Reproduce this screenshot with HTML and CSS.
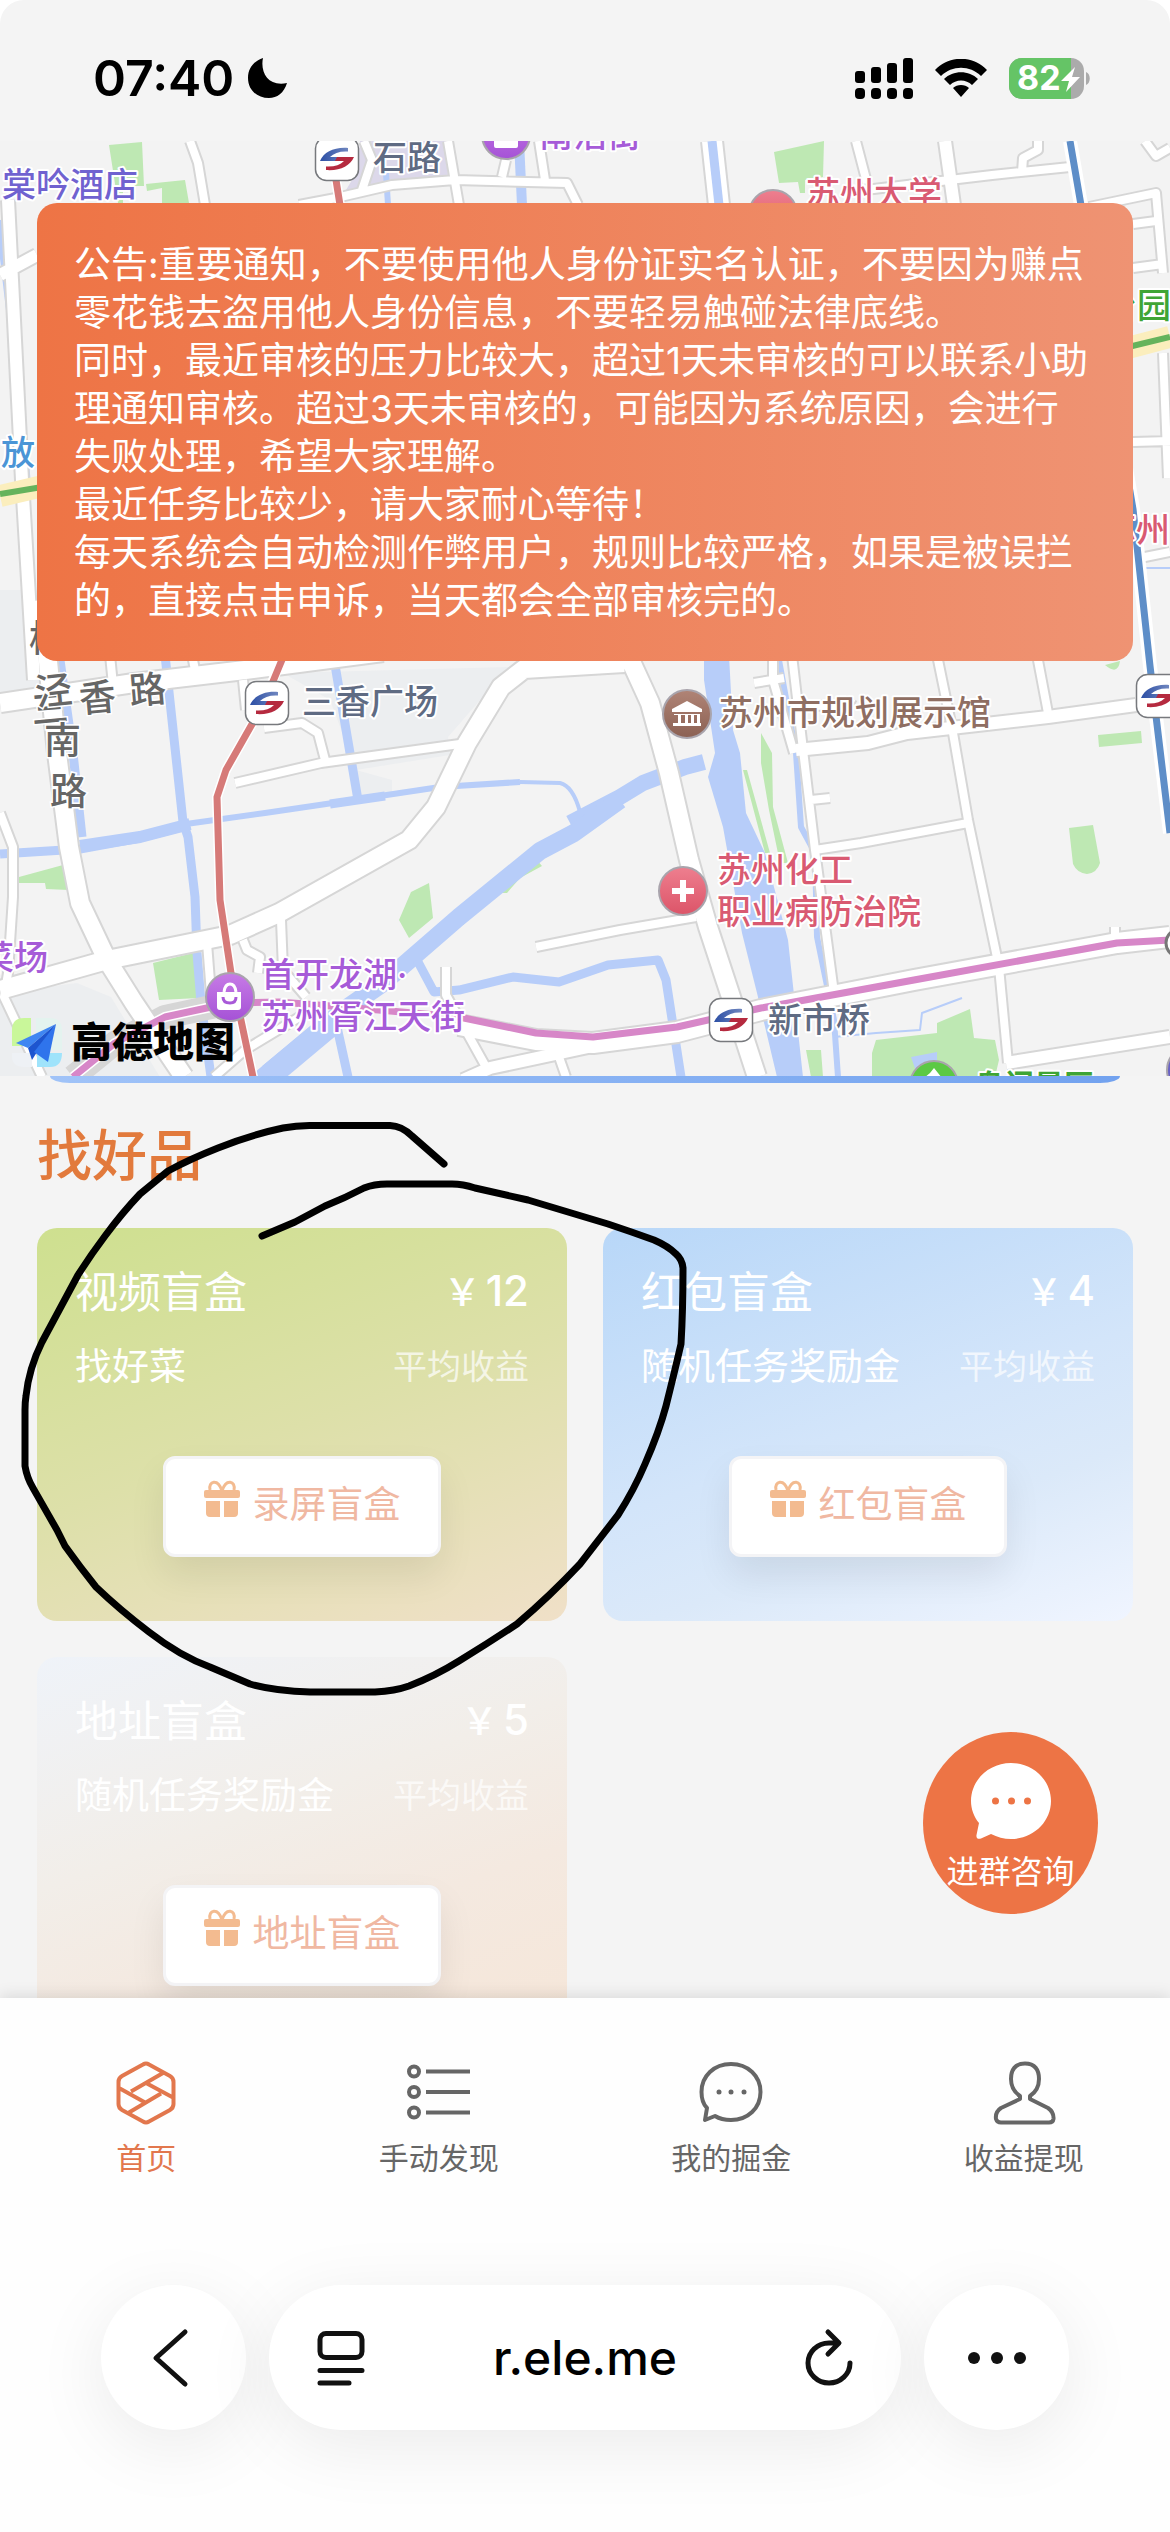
FILE: index.html
```html
<!DOCTYPE html>
<html lang="zh-CN">
<head>
<meta charset="utf-8">
<meta name="viewport" content="width=device-width, initial-scale=1">
<title>首页</title>
<link rel="stylesheet" href="styles.css">
</head>
<body>
<svg class="defs" aria-hidden="true">
  <defs>
    <linearGradient id="metro-blue" x1="0" y1="0" x2="1" y2="0"><stop offset="0" stop-color="#2c4fa5"/><stop offset="1" stop-color="#6f86bf"/></linearGradient>
    <linearGradient id="poi-purple" x1="0" y1="0" x2="0" y2="1"><stop offset="0" stop-color="#c77be6"/><stop offset="1" stop-color="#a552d6"/></linearGradient>
    <linearGradient id="poi-red" x1="0" y1="0" x2="0" y2="1"><stop offset="0" stop-color="#ee7f8f"/><stop offset="1" stop-color="#dc5468"/></linearGradient>
    <linearGradient id="poi-brown" x1="0" y1="0" x2="0" y2="1"><stop offset="0" stop-color="#b08476"/><stop offset="1" stop-color="#8b6153"/></linearGradient>
    <symbol id="metro" viewBox="-23 -23 46 46">
      <rect x="-21.500" y="-21.500" width="43" height="43" rx="11" fill="#fff" stroke="#77797d" stroke-width="1.500"/>
      <path d="M11-11C-3-12-13-7-17 2H0L2-2H-7C-3-6 3-8 11-7.500z" fill="url(#metro-blue)"/>
      <path d="M-11 11C3 12 13 7 17-2H0L-2 2H7C3 6-3 8-11 7.500z" fill="#b52a3f"/>
    </symbol>
    <symbol id="gift" viewBox="0 0 36 38">
      <path d="M18 11C14-2 4 1 6 10M18 11C22-2 32 1 30 10" fill="none" stroke="currentColor" stroke-width="3"/>
      <rect x="0" y="10" width="36" height="8" rx="2" fill="currentColor"/>
      <path d="M2 21h14v16H6a4 4 0 0 1-4-4zM20 21h14v12a4 4 0 0 1-4 4H20z" fill="currentColor"/>
    </symbol>
  </defs>
</svg>

<header class="status">
  <div class="status-side">
    <time class="clock">07:40</time>
    <svg class="moon" viewBox="0 0 40 40" role="img" aria-label="勿扰模式"><path d="M15 0C12 14 20 29 39 25C36 35 29 40 21 40C9 40 0 32 0 20C0 10 6 3 15 0z"/></svg>
  </div>
  <div class="status-side status-right">
    <svg class="signal" viewBox="0 0 58 41" role="img" aria-label="信号"><rect y="13" width="10" height="12" rx="3"/><rect x="16" y="9" width="10" height="16" rx="3"/><rect x="32" y="5" width="10" height="20" rx="3"/><rect x="48" width="10" height="25" rx="3"/><rect y="30" width="10" height="11" rx="4"/><rect x="16" y="30" width="10" height="11" rx="4"/><rect x="32" y="30" width="10" height="11" rx="4"/><rect x="48" y="30" width="10" height="11" rx="4"/></svg>
    <svg class="wifi" viewBox="0 0 52 38" role="img" aria-label="无线网络"><path d="M0 11C14-4 38-4 52 11l-6 6C35 6 17 6 6 17zM9 20c9-9 25-9 34 0l-6 6c-6-6-16-6-22 0zM18 29c4-4 12-4 16 0l-8 9z"/></svg>
    <svg class="battery" viewBox="0 0 82 41" role="img" aria-label="电量 82%">
      <rect width="75" height="41" rx="13" fill="#ababab"/><path d="M13 0h49v41H13A13 13 0 0 1 0 28V13A13 13 0 0 1 13 0z" fill="#65c466"/>
      <path d="M77 14c5 2 5 11 0 13z" fill="#ababab"/>
      <text x="8" y="32" class="battery-text">82</text>
      <path d="M66 9L52 23h8l-3 11 14-15h-8z" fill="#fff"/>
    </svg>
  </div>
</header>

<main class="content">
  <section class="map">
    <svg class="map-art" viewBox="0 141 1170 935" preserveAspectRatio="xMidYMid slice" role="img" aria-label="地图">
      <rect y="141" width="1170" height="935" fill="#f3f3f3"/>
      <path fill="#eceef0" d="M0 590H42L50 690L0 700zM283 673L509 667L448 737L450 755L356 770L392 780V793L360 800L345 740L330 700zM0 993L77 983L111 997L160 1077H0z"/>
      <path fill="#dcd8ea" d="M360 141H446L448 175L396 184L343 195L358 170z"/>
      <g fill="#bee8b3">
        <path d="M109 145L142 142L144 186H123V203H118zM146 184L185 180L189 203H162V188L147 191z"/>
        <path d="M774 152L824 141L823 177L805 180V193H800L798 182L779 183z"/>
        <path d="M19 877L63 865L69 890L46 889L45 883H19zM153 963L193 953L199 998L159 1000zM411 892L429 883L433 918L409 938L399 920z"/>
        <path d="M536 859L542 866L520 878L507 893H498L478 910L463 925L459 922L494 888z"/>
        <path d="M761 733L772 753L773 807L788 863H780L769 810L761 763zM743 770H747L770 853H765zM1098 735L1141 731L1142 743L1099 747zM1069 828L1093 825L1100 863Q1097 873 1087 874Q1077 873 1073 864z"/>
        <path d="M876 1040L937 1033V1023L970 1009L974 1038L995 1040L999 1060L995 1077H872V1053zM806 1050H821L823 1077H811zM1105 665Q1118 676 1120 661z"/>
      </g>
      <g fill="none" stroke="#b7cdf9" stroke-linejoin="round">
        <path stroke-width="9" d="M0 854L80 849L140 838L186 826"/>
        <path stroke-width="12" d="M80 846L140 837L190 824"/>
        <path stroke-width="6" d="M186 824L265 813L360 799L440 787L520 782"/>
        <path stroke-width="9" d="M330 804L385 796"/>
        <path stroke-width="4" d="M520 782L560 783Q573 786 580 812"/>
        <path stroke-width="9" d="M165 655L183 822L188 837L195 897L197 953L201 1003L211 1077M335 665L358 800M60 660L73 753L82 837M0 220L14 340L26 480"/>
        <path stroke-width="16" d="M704 762L685 767L643 783L620 797L570 823"/>
        <path stroke-width="18" d="M620 800L574 833L540 851L497 886L459 917L406 963L383 983L344 1010L268 1073"/>
        <path stroke-width="24" d="M330 1025L262 1082"/>
        <path stroke-width="9" d="M417 960L434 992L459 990L513 977L559 982L608 965L658 960L666 980L681 1077M337 1027L348 1077"/>
        <path stroke-width="6" d="M779 660L796 753L801 827L815 853L817 937L834 1020L838 1077"/>
        <path stroke-width="10" d="M519 141L522 205"/><path stroke-width="6" d="M386 173L388 205"/>
        <path stroke-width="2" d="M834 1037L876 1033L920 1030L922 1013L962 998M1140 568H1170"/>
      </g>
      <path fill="#b7cdf9" d="M704 655H729L733 730L740 753L746 813L765 853L788 940L803 1077H777L757 993L742 933L723 827L708 777L715 753L704 680zM911 1057L937 1052V1077H918z"/>
      <defs>
        <g id="small-roads">
          <path d="M190 141L198 163L205 205M299 205L336 198L392 185L455 180L567 183L578 205M448 141L459 205M506 160L502 177M539 141L545 180M364 141L372 160L362 190M856 141L867 183M865 190L992 175L1070 167M1038 141V150L1023 158L1022 172M1089 207L1156 193L1163 273M1133 224L1156 221M1133 268L1163 264M1163 353L1168 478M1133 442L1170 441M1140 558L1170 552M1145 141L1156 156L1170 148"/>
          <path d="M235 783L321 763L467 743M264 728L302 723L318 733L325 760M110 655L113 685M192 655L196 675M243 680L246 710M0 813L13 847V897L8 973L4 997L42 1077M207 943L212 1007M281 920L283 970L306 997M243 940L247 950L260 957L258 973M214 1077L245 1050L306 1013M446 967V995L486 1067M559 1057L566 1077M536 947L620 930L696 917"/>
          <path d="M792 655L803 750L815 850L834 993M773 655V680L794 753M937 655L953 733L968 820L999 967L1008 1063M1037 655L1048 713M815 850L861 843L968 823M811 800L830 798M754 683L784 678M1115 927V943M811 706L848 705L852 698"/>
        </g>
        <g id="big-roads">
          <path d="M42 600L57 753L69 847L80 903L107 960L134 1003L184 1077M0 990L107 960L230 935L279 913L409 840L436 807L467 743L501 687L524 669L624 663M0 703L134 683L245 670L383 652M628 655L650 703L669 773L689 860L708 927L731 997L757 1077"/>
        </g>
        <g id="mid-roads">
          <path d="M796 750L868 743L907 733L1048 717L1136 705M1006 1063L1170 1037M945 141L954 205M463 1080L490 1068L593 1046M0 275L37 255M8 200L22 480L34 680"/>
        </g>
      </defs>
      <g fill="none" stroke="#d6d6d6" stroke-linejoin="round">
        <use href="#small-roads" stroke-width="12"/><use href="#mid-roads" stroke-width="16"/><use href="#big-roads" stroke-width="22"/>
        <path stroke-width="24" d="M712 141L719 205M73 1077L115 1043L165 1017L230 1003M459 1025L536 1040L593 1043L677 1032L761 1010L914 980L1117 943L1170 937"/>
      </g>
      <g fill="none" stroke="#fff" stroke-linejoin="round">
        <use href="#small-roads" stroke-width="8"/><use href="#mid-roads" stroke-width="12"/><use href="#big-roads" stroke-width="18"/>
        <path stroke-width="20" d="M712 141L719 205M459 1025L536 1040L593 1043L677 1032L761 1010L914 980L1117 943L1170 937"/>
        <path stroke-width="14" d="M1070 141L1081 205L1133 509L1150 666L1170 833"/>
        <path stroke-width="10" d="M73 1077L115 1043L165 1017L230 1003M336 180L340 205M283 655L264 703L226 770L217 797L220 900L231 973L253 1077"/>
      </g>
      <g fill="none" stroke-linejoin="round">
        <path stroke="#b7cdf9" stroke-width="9" d="M712 141L719 205"/>
        <path stroke="#fbeebd" stroke-width="22" d="M0 496L60 482M1120 350L1170 337"/>
        <path stroke="#65b35c" stroke-width="6" d="M0 494L60 484M1120 349L1170 337"/>
        <path stroke="#d787c8" stroke-width="7" d="M73 1077L115 1043L165 1017L230 1003L279 1002L344 1007L459 1017L536 1033L593 1037L677 1027L761 1008L914 980L1117 943L1170 940"/>
        <path stroke="#d67a78" stroke-width="7" d="M336 180L340 205M284 655L264 703L226 770L217 797L220 900L231 973L253 1077"/>
        <path stroke="#5e8ec8" stroke-width="7" d="M1070 141L1081 205L1133 509L1150 666L1170 833"/>
      </g>
      <g stroke="#a9a4ac" stroke-width="2">
        <circle cx="230" cy="997" r="24" fill="url(#poi-purple)"/><circle cx="506" cy="135" r="24" fill="url(#poi-purple)"/>
        <circle cx="687" cy="714" r="24" fill="url(#poi-brown)"/><circle cx="683" cy="891" r="24" fill="url(#poi-red)"/>
        <circle cx="773" cy="214" r="24" fill="url(#poi-red)"/><circle cx="934" cy="1085" r="24" fill="#5cc945"/>
        <circle cx="1191" cy="1070" r="24" fill="#6861c6"/><circle cx="1180" cy="943" r="14" fill="#fff" stroke="#777" stroke-width="3"/>
      </g>
      <g fill="#fff">
        <path d="M217 992H241V1007Q241 1010 238 1010H220Q217 1010 217 1007zM494 135H518V146Q518 148 516 148H496Q494 148 494 146z"/>
        <path d="M687 701L702 709V712H672V709zM674 714H700V723H697V715H694V723H691V715H688V723H685V715H681V723H678V715H674zM673 723H701V726H673z"/>
        <path d="M680 880H686V888H694V894H686V902H680V894H672V888H680zM930 1073L934 1068L942 1078H924z"/>
      </g>
      <path fill="none" stroke="#fff" stroke-width="3" d="M224 992Q225 984 230 984Q235 984 236 992"/>
      <path fill="none" stroke="#a859d8" stroke-width="3" d="M223 997Q223 1003 230 1003Q236 1003 236 997"/>
      <use href="#metro" x="244" y="680" width="46" height="46"/><use href="#metro" x="708" y="997" width="46" height="46"/>
      <use href="#metro" x="314" y="136" width="46" height="46"/><use href="#metro" x="1135" y="673" width="46" height="46"/>
      <g class="map-label">
        <text x="373" y="170" fill="#5f6b83">石路</text>
        <text x="302" y="714" fill="#5f6b83">三香广场</text>
        <text x="768" y="1032" fill="#5f6b83">新市桥</text>
        <text x="2" y="197" fill="#7062d0">棠吟酒店</text>
        <text x="539" y="147" fill="#a65bd8">南浩街</text>
        <text x="806" y="206" fill="#d95a72">苏州大学</text>
        <text x="717" y="882" fill="#d95a72">苏州化工</text>
        <text x="717" y="924" fill="#d95a72">职业病防治院</text>
        <text x="1102" y="542" fill="#d95a72">苏州</text>
        <text x="719" y="725" fill="#8f6e62">苏州市规划展示馆</text>
        <text x="261" y="987" fill="#a65bd8">首开龙湖·</text>
        <text x="261" y="1029" fill="#a65bd8">苏州胥江天街</text>
        <text x="-20" y="970" fill="#a65bd8">菜场</text>
        <text x="1" y="465" fill="#4b95d6">放</text>
        <text x="1103" y="318" fill="#3fa535">台园</text>
        <text class="label-small" x="974" y="1096" fill="#3fa535">盘门景区</text>
      </g>
      <g class="road-label">
        <text x="29" y="652">横</text>
        <text x="31" y="722" transform="rotate(-5 49 709)">三</text><text x="35" y="704" transform="rotate(-6 53 690)">泾</text><text x="44" y="754">南</text><text x="50" y="805">路</text>
        <text x="79" y="711" transform="rotate(-5 97 698)">香</text><text x="129" y="703" transform="rotate(-5 147 690)">路</text>
      </g>
      <path fill="#c9f79a" d="M24 1018H31V1046H12V1030Q12 1018 24 1018z"/><path fill="#e4f3ef" d="M36 1018H50Q62 1018 62 1030V1050H36z"/><path fill="#9fe3fb" d="M37 1053H62Q62 1067 50 1067H37z"/><path fill="#eef1f5" d="M12 1053H32V1067H24Q12 1067 12 1056z"/>
      <path fill="#3f86f2" d="M56 1024L16 1043L28 1048z"/><path fill="#1d55cf" d="M56 1024L28 1048L32 1060L37 1052z"/><path fill="#2f74ec" d="M56 1024L34 1052L48 1062z"/>
      <text class="map-brand" x="71" y="1057">高德地图</text>
    </svg>
    <div class="notice">
      <p>公告:重要通知，不要使用他人身份证实名认证，不要因为赚点<br>零花钱去盗用他人身份信息，不要轻易触碰法律底线。</p>
      <p>同时，最近审核的压力比较大，超过1天未审核的可以联系小助<br>理通知审核。超过3天未审核的，可能因为系统原因，会进行<br>失败处理，希望大家理解。</p>
      <p>最近任务比较少，请大家耐心等待！</p>
      <p>每天系统会自动检测作弊用户，规则比较严格，如果是被误拦<br>的，直接点击申诉，当天都会全部审核完的。</p>
    </div>
  </section>
  <div class="banner-edge"></div>

  <section class="goods">
    <h1 class="goods-title">找好品</h1>
    <div class="cards">
      <article class="card card-green">
        <div class="row row-main"><h2>视频盲盒</h2><span class="price"><span class="yen">￥</span>12</span></div>
        <div class="row row-sub"><span>找好菜</span><span class="hint">平均收益</span></div>
        <button class="open" type="button"><svg class="gift"><use href="#gift"/></svg>录屏盲盒</button>
      </article>
      <article class="card card-blue">
        <div class="row row-main"><h2>红包盲盒</h2><span class="price"><span class="yen">￥</span>4</span></div>
        <div class="row row-sub"><span>随机任务奖励金</span><span class="hint">平均收益</span></div>
        <button class="open" type="button"><svg class="gift"><use href="#gift"/></svg>红包盲盒</button>
      </article>
      <article class="card card-sand">
        <div class="row row-main"><h2>地址盲盒</h2><span class="price"><span class="yen">￥</span>5</span></div>
        <div class="row row-sub"><span>随机任务奖励金</span><span class="hint">平均收益</span></div>
        <button class="open" type="button"><svg class="gift"><use href="#gift"/></svg>地址盲盒</button>
      </article>
    </div>
  </section>
</main>

<footer class="dock">
  <button class="chat" type="button">
    <svg class="chat-icon" viewBox="0 0 80 76"><path d="M40 0C62 0 80 17 80 38S62 76 40 76C33 76 26 74 20 71L10 75.500C7 76.500 5 75 5.500 72L8 60C3 54 0 46 0 38C0 17 18 0 40 0z" fill="#fff"/><g fill="#ed7445"><circle cx="24.500" cy="38" r="3.500"/><circle cx="40.500" cy="38" r="3.500"/><circle cx="56.500" cy="38" r="3.500"/></g></svg>
    进群咨询
  </button>
  <nav class="tabs">
    <a class="tab active" href="#home"><svg viewBox="0 0 64 64"><path d="M29 3.500Q32 1.500 35 3.500L56 15Q59.500 17 59.500 21V43Q59.500 47 56 49L35 60.500Q32 62.500 29 60.500L8 49Q4.500 47 4.500 43V21Q4.500 17 8 15zM49 12L17 30.500M32 22L59 36.500M5 27L32 42M47 32.500L15 51.500"/></svg>首页</a>
    <a class="tab" href="#discover"><svg viewBox="0 0 64 64"><g><circle cx="7" cy="10.500" r="5"/><circle cx="7" cy="31" r="5"/><circle cx="7" cy="51.500" r="5"/><path d="M19 10.500H63M19 31H63M19 51.500H63"/></g></svg>手动发现</a>
    <a class="tab" href="#chat"><svg viewBox="0 0 64 64"><path d="M32 3C49 3 61.500 15 61.500 31S49 59 32 59C26 59 20 57.500 16 55L6 59L8 47C4 43 2.500 37 2.500 31C2.500 15 15 3 32 3z"/><g fill="currentColor" stroke="none"><circle cx="20" cy="31" r="2.500"/><circle cx="32" cy="31" r="2.500"/><circle cx="45" cy="31" r="2.500"/></g></svg>我的掘金</a>
    <a class="tab" href="#income"><svg viewBox="0 0 64 64"><path d="M33 2.500C43 2.500 47 9 47 18C47 26 44 31 38 35V38L56 47Q62 51 61.500 58Q61 61.500 57 61.500H9Q5 61.500 4 58Q3 51 9 47L28 38V35C22 31 19 26 19 18C19 9 23 2.500 33 2.500z"/></svg>收益提现</a>
  </nav>
  <div class="browser">
    <button class="round" type="button" aria-label="后退"><svg viewBox="0 0 54 54"><path d="M38 1L9 27L38 53"/></svg></button>
    <div class="address">
      <button class="bare" type="button" aria-label="页面菜单"><svg viewBox="0 0 54 54"><rect x="6" y="2.500" width="42" height="24" rx="6" stroke-width="5"/><path stroke-width="5" d="M6 39.500H48M6 52H35"/></svg></button>
      <input class="url" type="text" value="r.ele.me" aria-label="网址">
      <button class="bare" type="button" aria-label="重新载入"><svg viewBox="0 0 54 54"><path d="M26 1L37 12L26 23M36 12H27A21 20 0 1 0 48 32"/></svg></button>
    </div>
    <button class="round" type="button" aria-label="更多"><svg viewBox="0 0 60 54"><g fill="currentColor" stroke="none"><circle cx="7" cy="27" r="6"/><circle cx="30" cy="27" r="6"/><circle cx="53" cy="27" r="6"/></g></svg></button>
  </div>
</footer>

<svg class="doodle" viewBox="0 0 700 600" aria-hidden="true"><path transform="translate(0 -1110)" d="M444 1164L412 1136Q402 1126 390 1125.500H314Q298 1125 283 1128Q250 1135 218 1148Q190 1159 168 1171L140 1194Q122 1213 105 1236Q90 1256 78 1275L42 1342Q29 1368 26 1396Q25 1402 25 1410V1466Q27 1478 33 1488L57 1530L65 1546Q80 1567 96 1587Q120 1610 149 1632Q180 1656 210 1667L250 1684Q275 1691 310 1692H375Q395 1691 409 1686Q435 1676 459 1661Q490 1642 517 1624Q550 1596 580 1564L618 1515Q634 1490 645 1464Q659 1432 666 1406Q675 1370 681 1344Q683 1310 683 1268Q682 1259 676 1254Q668 1246 654 1240Q632 1232 608 1224L528 1200L475 1188Q463 1184 452 1184H387Q374 1184 364 1188Q345 1198 325 1206L295 1222L262 1236"/></svg>
</body>
</html>
```

FILE: styles.css
```css
* { box-sizing: border-box; }

body {
  margin: 0;
  height: 100vh;
  display: flex;
  flex-direction: column;
  position: relative;
  overflow: hidden;
  background: #fff;
  color: #000;
  font-family: Inter, "Noto Sans CJK SC", sans-serif;
}

h1, h2, p { margin: 0; font-weight: 400; }
button, input { font: inherit; color: inherit; border: 0; background: none; padding: 0; }
.defs { position: absolute; width: 0; height: 0; }

/* status bar */
.status {
  flex: none;
  display: flex;
  justify-content: space-between;
  padding: 48px 79px 33px 93px;
  border-radius: 24px 24px 0 0;
  background: #f4f4f4;
}
.status-side { display: flex; align-items: center; gap: 14px; height: 60px; }
.status-right { gap: 22px; }
.clock { font-size: 50px; line-height: 60px; font-weight: 600; }
.moon { width: 40px; height: 40px; }
.signal { width: 58px; height: 41px; }
.wifi { width: 52px; height: 38px; }
.battery { width: 82px; height: 41px; }
.battery-text { font-size: 34px; font-weight: 700; fill: #fff; }

/* scrolling page */
.content {
  flex: 1;
  min-height: 0;
  overflow: hidden;
  background: #f4f4f4;
}
.map {
  position: relative;
  height: 935px;
  padding: 62px 37px 0;
}
.map-art { position: absolute; inset: 0; width: 100%; height: 100%; }
.map-label { font-size: 34px; font-weight: 500; stroke: #fff; stroke-width: 4px; paint-order: stroke; stroke-linejoin: round; }
.label-small { font-size: 30px; font-weight: 700; }
.road-label { font-size: 37px; font-weight: 500; fill: #666; stroke: #fff; stroke-width: 3px; paint-order: stroke; }
.map-brand { font-size: 41px; font-weight: 900; }

.notice {
  position: relative;
  padding: 38px 37px 36px;
  border-radius: 20px;
  background: linear-gradient(90deg, #ee7445, #ef9373);
  color: #fff;
  font-size: 37px;
  line-height: 48px;
  font-weight: 300;
  white-space: nowrap;
}
.banner-edge {
  height: 7px;
  margin: 0 50px;
  border-radius: 0 0 20px 20px / 0 0 7px 7px;
  background: linear-gradient(90deg, #a0c3f8, #72a2ef);
}

.goods { padding: 36px 37px; }
.goods-title {
  margin-bottom: 37px;
  color: #e27a3c;
  font-size: 55px;
  line-height: 72px;
  font-weight: 500;
}
.cards { display: grid; grid-template-columns: 1fr 1fr; gap: 36px; }
.card {
  display: flex;
  flex-direction: column;
  padding: 37px 38px 64px;
  border-radius: 20px;
  color: #fff;
}
.card-green { background: linear-gradient(160deg, #cee08f, #dde0a9 50%, #f0e0c8); }
.card-blue { background: linear-gradient(160deg, #b8d7f8, #d3e5fa 50%, #dbe9f9 70%, #f0f5ff); }
.card-sand { background: linear-gradient(160deg, #eff3f9, #f2eee9 40%, #f4e9e0 65%, #f6e6d8); }
.row { display: flex; justify-content: space-between; align-items: center; }
.row-main { height: 54px; margin-bottom: 22px; }
.row-main h2 { font-size: 43px; line-height: 54px; }
.price { font-size: 42px; line-height: 54px; font-weight: 500; }
.yen { margin-right: 5px; font-size: 37px; }
.row-sub { height: 52px; margin-bottom: 63px; font-size: 37px; line-height: 52px; }
.hint { font-size: 34px; opacity: .7; }
.open {
  align-self: center;
  display: flex;
  justify-content: center;
  gap: 13px;
  width: 278px;
  height: 101px;
  padding-top: 21px;
  border: 3px solid #f4f4f6;
  border-radius: 12px;
  background: #fff;
  box-shadow: 0 18px 36px rgba(0, 0, 0, .08);
  color: #f0b8a2;
  font-size: 37px;
  line-height: 50px;
}
.gift { width: 36px; height: 38px; color: #f3bb90; }

/* bottom dock */
.dock {
  flex: none;
  position: relative;
  background: #fefefe;
  box-shadow: 0 -3px 14px rgba(0, 0, 0, .1);
}
.chat {
  position: absolute;
  right: 72px;
  bottom: calc(100% + 84px);
  display: flex;
  flex-direction: column;
  align-items: center;
  gap: 13px;
  width: 175px;
  height: 182px;
  padding-top: 31px;
  border-radius: 50%;
  background: #ed7445;
  color: #fff;
  font-size: 32px;
  line-height: 40px;
  white-space: nowrap;
}
.chat-icon { width: 80px; height: 76px; }

.tabs { display: grid; grid-template-columns: repeat(4, 1fr); padding: 63px 0 107px; }
.tab {
  display: flex;
  flex-direction: column;
  align-items: center;
  gap: 13px;
  color: #666;
  font-size: 30px;
  line-height: 40px;
  text-decoration: none;
}
.tab svg { width: 64px; height: 64px; fill: none; stroke: currentColor; stroke-width: 4px; stroke-linejoin: round; }
.active { color: #e2774d; }

.browser { display: flex; gap: 23px; padding: 0 101px 102px; }
.round, .address {
  height: 145px;
  border-radius: 73px;
  background: #fff;
  box-shadow: 0 16px 72px rgba(0, 0, 0, .08);
}
.round { flex: none; width: 145px; display: grid; place-items: center; }
.address { flex: 1; min-width: 0; display: flex; align-items: center; justify-content: space-between; padding: 0 45px; }
.browser svg { display: block; width: 54px; height: 54px; overflow: visible; fill: none; stroke: currentColor; stroke-width: 5px; stroke-linecap: round; stroke-linejoin: round; color: #111; }
.browser .round:last-child svg { width: 60px; }
.url { flex: 1; min-width: 0; text-align: center; font-size: 48px; line-height: 60px; font-weight: 500; outline: 0; }

/* hand-drawn ring over the page */
.doodle {
  position: absolute;
  left: 0;
  top: 1110px;
  width: 700px;
  height: 600px;
  pointer-events: none;
  fill: none;
  stroke: #000;
  stroke-width: 7px;
  stroke-linecap: round;
  stroke-linejoin: round;
}
```
